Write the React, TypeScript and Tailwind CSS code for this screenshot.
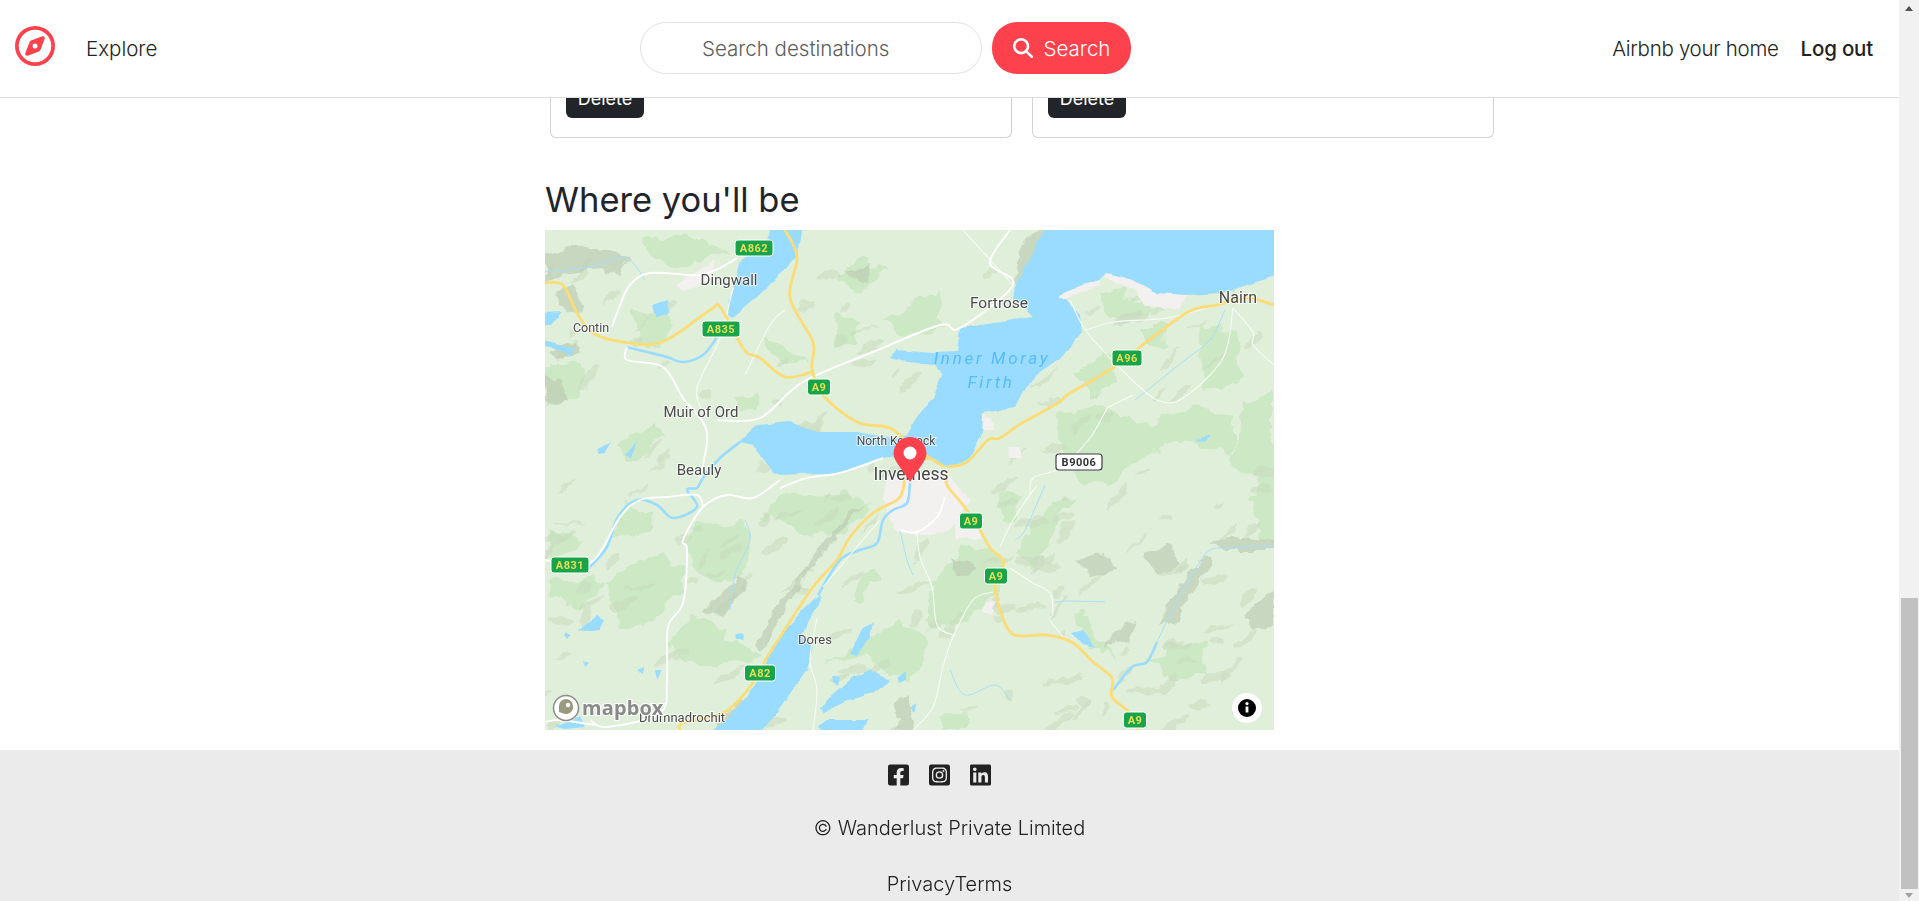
import React from "react";
import { FaRegCompass, FaMagnifyingGlass } from "react-icons/fa6";
import { FaFacebookSquare, FaInstagramSquare, FaLinkedin } from "react-icons/fa";

const P = (pts: number[]) => {
  let s = "";
  for (let i = 0; i < pts.length; i += 2) s += (i ? " " : "") + pts[i] + "," + pts[i + 1];
  return s;
};

// Catmull-Rom through the points, so that roads and rivers bend instead of kink
const smooth = (p: number[]) => {
  let d = `M${p[0]} ${p[1]}`;
  const n = p.length / 2;
  const at = (i: number) => {
    const k = Math.max(0, Math.min(n - 1, i));
    return [p[k * 2], p[k * 2 + 1]];
  };
  for (let i = 0; i < n - 1; i++) {
    const [x0, y0] = at(i - 1);
    const [x1, y1] = at(i);
    const [x2, y2] = at(i + 1);
    const [x3, y3] = at(i + 2);
    const c1x = x1 + (x2 - x0) / 6;
    const c1y = y1 + (y2 - y0) / 6;
    const c2x = x2 - (x3 - x1) / 6;
    const c2y = y2 - (y3 - y1) / 6;
    d += ` C${c1x.toFixed(1)} ${c1y.toFixed(1)} ${c2x.toFixed(1)} ${c2y.toFixed(1)} ${x2} ${y2}`;
  }
  return d;
};

const WATER = "#9adcff";
const LAND = "#e0efda";
const GREEN = "#cde8c4";
const HILL = "#bdcdb4";
const SAND = "#f3f0f0";

const waters: number[][] = [
  [225, -10, 258, -10, 252, 25, 228, 52, 212, 67, 187, 88, 183, 85, 185, 68, 192, 45, 195, 32, 222, 12],
  [195, 212, 212, 195, 245, 192, 272, 202, 312, 202, 348, 208, 362, 205, 372, 188, 388, 168, 397, 145, 388, 135, 355, 131, 345, 128, 352, 120, 388, 123, 412, 122, 415, 98, 488, 87, 468, 68, 470, 57, 505, -10, 740, -10, 740, 43, 702, 55, 675, 63, 642, 65, 612, 63, 588, 50, 562, 43, 555, 50, 532, 57, 512, 67, 522, 70, 535, 85, 537, 102, 515, 128, 495, 142, 480, 158, 470, 178, 438, 183, 437, 202, 425, 228, 408, 237, 398, 235, 382, 225, 362, 225, 338, 228, 295, 243, 278, 243, 235, 245, 228, 242, 208, 215],
  [273, 365, 255, 383, 228, 417, 215, 447, 195, 477, 158, 510, 208, 510, 235, 480, 262, 440, 268, 417, 257, 407, 262, 393, 277, 367],
  [275, 477, 282, 470, 308, 447, 325, 440, 345, 450, 328, 463, 305, 470, 278, 483],
  [305, 423, 318, 397, 328, 392, 325, 407, 312, 425],
  [33, 400, 52, 385, 60, 390, 55, 400, 38, 402],
  [527, 403, 538, 400, 550, 418, 538, 415],
  [107, 75, 123, 70, 125, 83, 110, 87],
  [-5, 83, 17, 82, 5, 95, -5, 95],
  [-5, 110, 28, 118, 25, 125, 5, 117, -5, 115],
  [52, 220, 66, 212, 60, 222, 54, 223],
  [80, 225, 92, 212, 86, 228],
  [287, 447, 295, 447, 293, 455, 288, 452],
  [353, 447, 362, 440, 362, 450, 355, 453],
  [272, 495, 280, 490, 322, 490, 315, 505, 278, 505],
  [10, 497, 35, 487, 40, 497, 20, 499],
  [190, 405, 198, 404, 197, 410, 191, 410],
  [20, 402, 27, 405, 22, 409],
  [38, 430, 44, 433, 40, 437],
  [110, 440, 117, 440, 112, 450],
  [92, 440, 99, 437, 99, 445],
  [650, 210, 665, 205, 660, 212],
  [495, 132, 503, 130, 498, 138],
  [365, 478, 372, 472, 369, 483],
];

const rivers: number[][] = [
  [82, 117, 102, 122, 122, 127, 138, 132, 158, 125, 170, 110, 175, 100],
  [195, 212, 175, 228, 158, 248, 152, 258, 142, 260, 152, 277, 128, 288, 112, 275, 92, 270, 73, 287, 62, 317, 45, 337],
  [273, 365, 295, 330, 315, 320, 332, 313, 338, 290, 348, 280, 362, 273, 365, 253],
  [568, 460, 587, 437, 602, 432, 612, 412],
];

const thinRivers: number[][] = [
  [612, 412, 630, 375, 650, 340, 665, 320, 690, 318, 729, 315],
  [510, 372, 525, 371, 560, 372],
  [590, 170, 640, 130, 665, 110, 680, 80],
  [200, 290, 205, 310, 190, 345, 185, 380],
  [355, 300, 362, 330, 368, 345],
  [500, 255, 480, 300, 470, 310],
  [405, 440, 420, 465, 450, 455, 465, 470],
  [0, 42, 40, 38, 80, 28, 100, 50],
];

const greens: number[][] = [
  [512, 185, 555, 175, 602, 195, 648, 178, 688, 192, 688, 222, 622, 212, 568, 248, 542, 258, 515, 225],
  [698, 172, 729, 162, 729, 262, 688, 228],
  [415, 317, 455, 327, 455, 367, 415, 393, 388, 397, 388, 360],
  [512, 270, 532, 270, 512, 293, 492, 337, 488, 343, 468, 323, 488, 293],
  [537, 382, 568, 430, 548, 417, 527, 383],
  [603, 427, 657, 412, 660, 447, 618, 447],
  [708, 250, 729, 250, 729, 313, 715, 310],
  [215, 287, 245, 263, 318, 267, 328, 280, 295, 303, 262, 307],
  [152, 293, 195, 290, 208, 317, 198, 347, 168, 353, 142, 333],
  [125, 417, 145, 383, 172, 397, 208, 417, 215, 427, 182, 437, 152, 437],
  [62, 353, 105, 323, 138, 337, 138, 360, 95, 400, 72, 390],
  [5, 350, 42, 350, 62, 353, 28, 377, 8, 373],
  [5, 300, 38, 307, 35, 317, 5, 330],
  [78, 270, 108, 280, 98, 300, 68, 307],
  [278, 437, 328, 407, 348, 387, 385, 413, 362, 450, 315, 423],
  [305, 367, 328, 337, 338, 347, 315, 370],
  [88, 82, 105, 78, 128, 92, 115, 112, 92, 112],
  [215, 108, 238, 112, 262, 132, 235, 135, 222, 122],
  [195, 165, 215, 162, 212, 180, 195, 182],
  [72, 218, 112, 188, 118, 208, 82, 235],
  [295, 35, 322, 28, 338, 42, 312, 62, 295, 52],
  [338, 92, 395, 55, 395, 95, 360, 110],
  [95, 12, 152, 5, 182, 22, 152, 35, 108, 32],
  [0, 135, 35, 135, 37, 165, 0, 175],
  [555, 60, 590, 68, 608, 82, 585, 88, 560, 85],
  [600, 95, 625, 95, 620, 115, 600, 112],
  [650, 95, 690, 100, 700, 150, 660, 160],
  [290, 88, 320, 92, 310, 115, 290, 115],
  [455, 265, 478, 262, 472, 290, 455, 295],
  [525, 140, 560, 128, 575, 150, 545, 165],
  [395, 485, 425, 480, 420, 500, 395, 500],
];

const hills: number[][] = [
  [0, 25, 35, 15, 85, 28, 75, 45, 58, 38, 22, 42, 0, 55],
  [5, 120, 32, 112, 35, 125, 15, 128],
  [0, 145, 18, 150, 22, 170, 0, 175],
  [10, 65, 30, 55, 38, 85, 15, 75],
  [331, 268, 318, 275, 285, 315, 262, 345, 232, 392, 216, 422, 210, 416, 228, 385, 255, 345, 280, 312, 305, 283],
  [476, 20, 492, 0, 505, 0, 478, 48, 470, 55],
  [612, 395, 625, 372, 642, 345, 660, 325, 668, 332, 650, 358, 632, 392],
  [600, 325, 625, 315, 635, 335, 612, 345],
  [665, 312, 690, 308, 729, 312, 729, 320, 680, 320],
  [530, 330, 560, 322, 572, 340, 545, 347],
  [558, 415, 580, 395, 592, 392, 585, 412],
  [160, 380, 195, 345, 203, 352, 178, 388],
  [405, 330, 425, 332, 432, 342, 412, 347],
  [172, 492, 212, 458, 198, 480, 180, 496],
  [352, 470, 362, 465, 370, 500, 350, 500],
  [700, 385, 729, 360, 729, 395, 708, 400],
  [300, 40, 325, 35, 320, 55],
];

const sands: number[][] = [
  [562, 43, 588, 50, 612, 63, 642, 65, 635, 80, 600, 75, 590, 60, 560, 48],
  [512, 67, 532, 57, 555, 50, 555, 55, 535, 62, 522, 70],
  [522, 70, 535, 85, 537, 102, 530, 95],
  [342, 248, 400, 240, 425, 270, 405, 300, 375, 306, 350, 300, 338, 270],
  [408, 285, 432, 285, 436, 308, 412, 308],
  [438, 185, 447, 190, 450, 200, 438, 200],
  [463, 217, 476, 217, 476, 228, 464, 228],
  [440, 372, 450, 370, 447, 385, 438, 382],
  [130, 55, 170, 30, 165, 50, 140, 62],
];

const yellowRoads: number[][] = [
  [240, 0, 252, 27, 245, 68, 268, 112, 267, 138, 278, 165, 312, 192, 345, 198, 365, 215, 385, 228, 400, 237],
  [0, 53, 18, 55, 32, 83, 48, 103, 78, 112, 117, 112, 165, 80, 175, 77, 192, 108, 202, 123, 215, 128, 240, 147, 267, 142],
  [402, 237, 422, 232, 443, 210, 455, 208, 477, 193, 513, 173, 522, 165, 548, 150, 572, 135, 595, 117, 643, 82, 672, 75, 702, 68, 729, 75],
  [358, 260, 352, 270, 328, 283, 305, 307, 292, 330, 268, 357, 235, 407, 222, 427, 205, 457, 178, 483, 138, 493, 135, 500],
  [402, 240, 402, 255, 418, 275, 435, 300, 445, 318, 458, 330, 457, 340, 450, 357, 455, 380, 465, 402, 478, 406, 502, 405, 528, 413, 548, 432, 567, 448, 567, 467, 585, 483, 593, 500],
  [358, 260, 364, 235, 385, 228],
];

const whiteRoads: number[][] = [
  [67, 97, 75, 75, 85, 55, 105, 43, 152, 45, 175, 38, 192, 28],
  [82, 117, 82, 130, 118, 137, 138, 168, 158, 192, 162, 212, 155, 248],
  [172, 190, 215, 188, 258, 152, 328, 122, 395, 95, 415, 98, 468, 55, 445, 33, 465, 0],
  [235, 250, 208, 268, 182, 265, 158, 277, 138, 310, 142, 320, 138, 373, 123, 397, 122, 450, 115, 483, 62, 497, 45, 490],
  [0, 330, 45, 333, 75, 287, 95, 270, 122, 267, 152, 265, 158, 277],
  [338, 228, 295, 243, 262, 248, 235, 258],
  [355, 300, 372, 302, 392, 287, 400, 267],
  [0, 492, 15, 490, 50, 495],
];

const minorRoads: number[][] = [
  [188, 58, 175, 108, 152, 158, 158, 182],
  [418, 0, 468, 55],
  [542, 100, 568, 92, 622, 88, 672, 75],
  [525, 70, 542, 102, 582, 145, 612, 170, 638, 168, 678, 128, 688, 78],
  [688, 78, 708, 102, 708, 115, 729, 135],
  [562, 178, 545, 208, 515, 238, 488, 248, 485, 265],
  [562, 178, 588, 165],
  [465, 338, 488, 353, 505, 363, 508, 383, 505, 390, 518, 407],
  [448, 362, 428, 370, 408, 407, 398, 437, 388, 477, 368, 500],
  [372, 300, 375, 327, 387, 357, 392, 395, 408, 405],
  [455, 317, 468, 290, 492, 255],
  [272, 388, 265, 430, 272, 460, 268, 500],
  [278, 357, 305, 325, 335, 290],
  [200, 145, 225, 95, 240, 80],
];

const shields: [string, number, number, number][] = [
  ["A862", 209, 18, 38],
  ["A835", 176, 99, 38],
  ["A9", 274, 157, 23],
  ["A96", 582, 128, 30],
  ["A831", 25, 335, 38],
  ["A82", 215, 443, 31],
  ["A9", 426, 291, 23],
  ["A9", 451, 346, 23],
  ["A9", 590, 490, 23],
];

const labels: [string, number, number, number][] = [
  ["Dingwall", 184, 55, 15],
  ["Contin", 46, 102, 12.5],
  ["Fortrose", 454, 78, 15.5],
  ["Nairn", 693, 73, 16],
  ["Muir of Ord", 156, 187, 15],
  ["Beauly", 154, 245, 15],
  ["North Kessock", 351, 215, 12],
  ["Dores", 270, 414, 13],
  ["Drumnadrochit", 137, 492, 13],
];

// a fixed scatter of small hill-shade wisps
const wisps = (() => {
  let seed = 7;
  const r = () => {
    seed = (seed * 16807) % 2147483647;
    return seed / 2147483647;
  };
  return Array.from({ length: 170 }, () => ({
    x: r() * 729,
    y: 40 + r() * 460,
    rx: 5 + r() * 13,
    ry: 1.5 + r() * 3.5,
    a: -60 + r() * 60,
  }));
})();

const mapFont = { fontFamily: "Roboto, 'Noto Sans', sans-serif" };

function MapArt() {
  return (
    <svg viewBox="0 0 729 500" width="729" height="500" className="block">
      <defs>
        <filter id="rough" filterUnits="userSpaceOnUse" x="-20" y="-20" width="769" height="540">
          <feTurbulence type="fractalNoise" baseFrequency="0.045" numOctaves="3" seed="4" result="n" />
          <feDisplacementMap in="SourceGraphic" in2="n" scale="22" xChannelSelector="R" yChannelSelector="G" />
        </filter>
        <filter id="shore" filterUnits="userSpaceOnUse" x="-20" y="-20" width="769" height="540">
          <feTurbulence type="fractalNoise" baseFrequency="0.06" numOctaves="2" seed="9" result="n" />
          <feDisplacementMap in="SourceGraphic" in2="n" scale="5" xChannelSelector="R" yChannelSelector="G" />
        </filter>
        <filter id="shade" filterUnits="userSpaceOnUse" x="-20" y="-20" width="769" height="540">
          <feTurbulence type="fractalNoise" baseFrequency="0.06" numOctaves="3" seed="2" result="n" />
          <feDisplacementMap in="SourceGraphic" in2="n" scale="12" xChannelSelector="R" yChannelSelector="G" />
          <feGaussianBlur stdDeviation="0.7" />
        </filter>
      </defs>
      <rect width="729" height="500" fill={LAND} />
      <g filter="url(#rough)">
        {greens.map((p, i) => <polygon key={i} points={P(p)} fill={GREEN} />)}
      </g>
      <g filter="url(#shade)">
        {wisps.map((w, i) => (
          <ellipse key={i} cx={w.x} cy={w.y} rx={w.rx} ry={w.ry} fill="#c9dac0" opacity="0.55" transform={`rotate(${w.a} ${w.x} ${w.y})`} />
        ))}
        {hills.map((p, i) => <polygon key={i} points={P(p)} fill={HILL} opacity="0.7" />)}
      </g>
      <g filter="url(#shore)">
        {sands.map((p, i) => <polygon key={i} points={P(p)} fill={SAND} />)}
        <polygon points="492,97 519,88 536,84 527,102 504,110" fill="#e3e6f1" />
        {waters.map((p, i) => <polygon key={i} points={P(p)} fill={WATER} />)}
      </g>
      {rivers.map((p, i) => <path key={i} d={smooth(p)} fill="none" stroke={WATER} strokeWidth="2.6" />)}
      {thinRivers.map((p, i) => <path key={i} d={smooth(p)} fill="none" stroke="#a8dffa" strokeWidth="1" />)}
      {minorRoads.map((p, i) => <path key={i} d={smooth(p)} fill="none" stroke="#f7fbf5" strokeWidth="1.1" />)}
      {whiteRoads.map((p, i) => <path key={i} d={smooth(p)} fill="none" stroke="#ffffff" strokeWidth="1.9" />)}
      {yellowRoads.map((p, i) => <path key={i} d={smooth(p)} fill="none" stroke="#fbdc76" strokeWidth="2.8" />)}
      <g style={mapFont} fill="#55bdf9" fontSize="17" fontStyle="italic" letterSpacing="2.7" textAnchor="middle">
        <text x="447" y="134">Inner Moray</text>
        <text x="446" y="158">Firth</text>
      </g>
      <g style={mapFont} textAnchor="middle" fill="#4a4a4a" stroke="#ffffff" strokeOpacity="0.7" strokeWidth="2" paintOrder="stroke">
        {labels.map(([t, x, y, s]) => <text key={t} x={x} y={y} fontSize={s}>{t}</text>)}
      </g>
      {shields.map(([t, x, y, w], i) => (
        <g key={i}>
          <rect x={x - w / 2} y={y - 8} width={w} height={16} rx="3" fill="#18a44a" stroke="#ffffff" strokeWidth="1" />
          <text x={x} y={y + 4} textAnchor="middle" fontSize="11" fontWeight="700" fill="#e6dd55" letterSpacing="0.5" style={mapFont}>{t}</text>
        </g>
      ))}
      <rect x="511" y="224" width="46" height="16" rx="3" fill="#ffffff" stroke="#3c3c46" strokeWidth="1.2" />
      <text x="534" y="236" textAnchor="middle" fontSize="11" fontWeight="700" fill="#333" letterSpacing="0.5" style={mapFont}>B9006</text>
      <text x="366" y="250" textAnchor="middle" fontSize="17.5" fill="#454545" stroke="#ffffff" strokeOpacity="0.7" strokeWidth="2" paintOrder="stroke" style={mapFont}>Inverness</text>
      <path d="M365 252 C358 240 348.5 231 348.5 223.5 A16.5 16.5 0 0 1 381.5 223.5 C381.5 231 372 240 365 252 Z" fill="#fe424d" />
      <circle cx="365" cy="223" r="6.5" fill="#ffffff" />
      <g>
        <circle cx="21" cy="478" r="12.5" fill="#ffffff" stroke="#8d8d8d" strokeWidth="1.5" />
        <path d="M14 482 L14 476 A7 7 0 0 1 28 476 A7 7 0 0 1 20 484 Z" fill="#9a9a80" />
        <circle cx="23" cy="475" r="2.2" fill="#ffffff" />
        <text x="37" y="485" fontSize="20" fontWeight="700" fill="#8a8a8a" stroke="#ffffff" strokeWidth="2.2" paintOrder="stroke" letterSpacing="0.2" style={{ fontFamily: "'Noto Sans', sans-serif" }}>mapbox</text>
      </g>
      <circle cx="702" cy="478" r="15" fill="#ffffff" />
      <circle cx="702" cy="478" r="9" fill="#000000" />
      <rect x="700.6" y="476.5" width="2.8" height="6" fill="#ffffff" />
      <circle cx="702" cy="473.6" r="1.6" fill="#ffffff" />
    </svg>
  );
}

const sans = "font-['Inter','Noto_Sans',sans-serif]";

function Card() {
  return (
    <div className="h-[40px] w-[462px] rounded-b-[6px] border border-t-0 border-[#d2d2d2] pl-[15px]">
      <button className="-mt-[18px] block h-[38px] w-[78px] rounded-[6px] bg-[#212529] text-[18px] leading-[38px] text-white">Delete</button>
    </div>
  );
}

export default function App() {
  return (
    <div className={`flex h-[901px] w-full overflow-hidden bg-white text-[#222222] ${sans}`}>
      <div className="flex min-w-0 flex-1 flex-col">
        <header className="relative z-10 flex h-[98px] shrink-0 items-center border-b border-[#dedede] bg-white pl-[15px] pr-[26px] text-[20.5px] font-light">
          <FaRegCompass className="-mt-[6px] h-[40px] w-[40px] text-[#fe424d]" />
          <span className="ml-[31px] mt-[2px] w-[72px]">Explore</span>
          <div className="-mt-[2px] ml-[482px] flex items-center">
            <div className="flex h-[52px] w-[342px] items-center rounded-[26px] border border-[#dee2e6] pl-[61px] pt-[3px] text-[#595c5f]">Search destinations</div>
            <button className="ml-[10px] flex h-[52px] w-[139px] items-center justify-center gap-[11px] rounded-[25px] bg-[#fe424d] pt-[3px] text-white">
              <FaMagnifyingGlass className="-mt-[2px] h-[20px] w-[20px]" />
              Search
            </button>
          </div>
          <span className="ml-auto mt-[2px] tracking-[-0.3px]">Airbnb your home</span>
          <span className="ml-[22px] mt-[2px] font-medium tracking-[-0.2px]">Log out</span>
        </header>
        <main className="flex-1 overflow-hidden">
          <div className="ml-[550px] flex gap-[20px]">
            <Card />
            <Card />
          </div>
          <h3 className="ml-[545px] mt-[36px] h-[56px] text-[34.5px] font-normal leading-[52px] text-[#212529]">Where you'll be</h3>
          <div className="ml-[545px]"><MapArt /></div>
        </main>
        <footer className="flex h-[151px] shrink-0 flex-col items-center bg-[#ebebeb]">
          <div className="mr-[20px] mt-[13px] flex h-[24px] gap-[20px] text-[#222222]">
            <FaFacebookSquare className="h-[24px] w-[21px]" />
            <FaInstagramSquare className="h-[24px] w-[21px]" />
            <FaLinkedin className="h-[24px] w-[21px]" />
          </div>
          <div className="mt-[26px] text-[20px] font-light">© Wanderlust Private Limited</div>
          <div className="mt-[26px] text-[20px] font-light">PrivacyTerms</div>
        </footer>
      </div>
      <div className="flex w-[20px] shrink-0 flex-col bg-[#f1f1f1]">
        <div className="flex h-[17px] items-center justify-center">
          <div className="h-0 w-0 border-x-[4px] border-b-[5px] border-x-transparent border-b-[#505050]" />
        </div>
        <div className="ml-[2px] mt-[581px] h-[291px] w-[17px] bg-[#c1c1c1]" />
        <div className="flex flex-1 items-center justify-center">
          <div className="h-0 w-0 border-x-[4px] border-t-[5px] border-x-transparent border-t-[#a3a3a3]" />
        </div>
      </div>
    </div>
  );
}
